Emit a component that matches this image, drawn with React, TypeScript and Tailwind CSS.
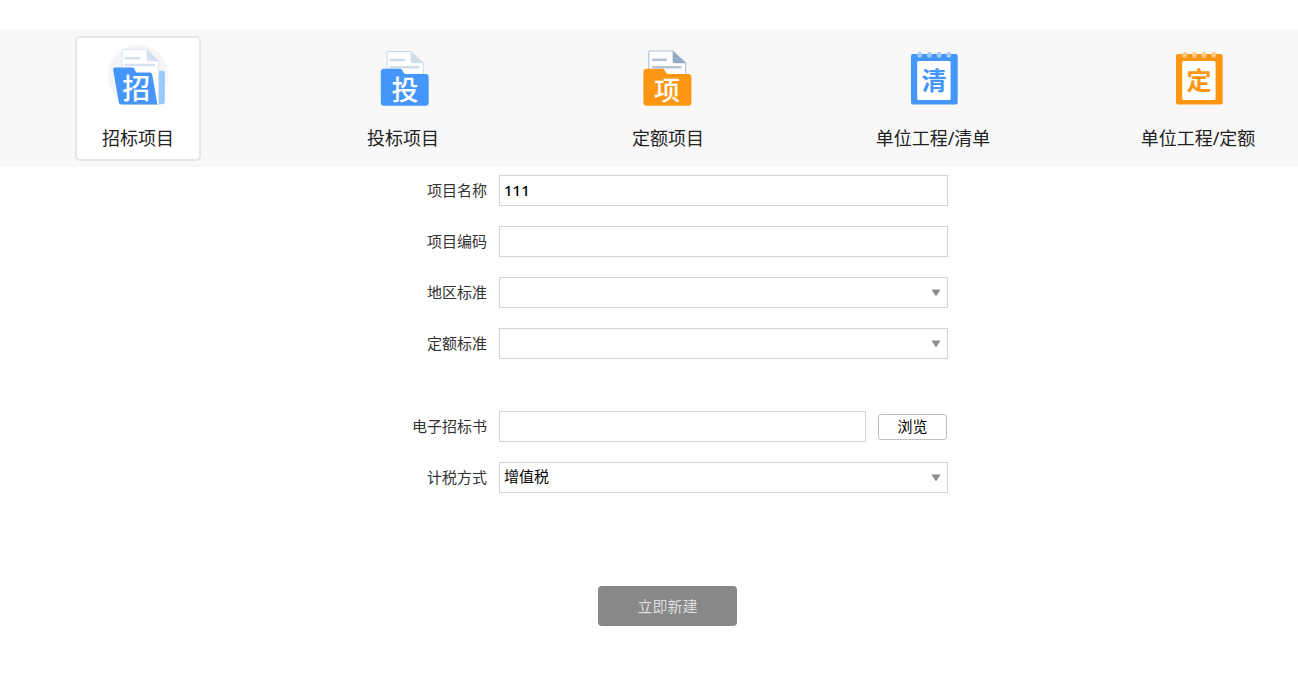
import React, { useState } from 'react';
import { clsx } from 'clsx';

type IconProps = { char: string };

const ICON_FONT = "font-['Noto_Sans_CJK_SC',sans-serif] font-medium";

function OpenFolderIcon({ char }: IconProps) {
  return (
    <svg viewBox="0 0 60 60" className="size-[60px] overflow-visible" aria-hidden="true">
      <circle cx="30" cy="30" r="30" fill="#f5f5f5" />
      <path d="M50 25.7h5a1.8 1.8 0 0 1 1.8 1.8V57a2.3 2.3 0 0 1-2.3 2.3H46z" fill="#97c9fe" />
      <path d="M16 4.3h22.7L50.6 16v43H14V6.3a2 2 0 0 1 2-2z" fill="#fff" stroke="#d9e4f3" strokeWidth="1" />
      <path d="M38.7 4.3 51 16.3H40.7a2 2 0 0 1-2-2z" fill="#d3dfee" />
      <path d="M17.5 13.3H31M17.5 20H46" stroke="#d5e1f0" strokeWidth="2.4" strokeLinecap="round" />
      <path d="M7 22.6h17.5a2 2 0 0 1 1.8 1.2l1.3 2.6a2 2 0 0 0 1.8 1.2h12.4a2.4 2.4 0 0 1 2.4 2l5.2 29.8H13.2a2.4 2.4 0 0 1-2.4-2L5.2 25a2 2 0 0 1 1.8-2.4z" fill="#4596fa" />
      <text x="28.2" y="53.6" fontSize="28" textAnchor="middle" fill="#fff" className={ICON_FONT}>{char}</text>
    </svg>
  );
}

function BlueFolderIcon({ char }: IconProps) {
  return (
    <svg viewBox="0 0 60 60" className="size-[60px] overflow-visible" aria-hidden="true">
      <circle cx="30" cy="30" r="30" fill="#f7f7f7" />
      <path d="M15.5 6.5h22.2l12.6 11.7V34H14V8a1.5 1.5 0 0 1 1.5-1.5z" fill="#fff" stroke="#c9d9ec" strokeWidth="1" />
      <path d="M37.7 6.3 50.8 18.3H39.7a2 2 0 0 1-2-2z" fill="#cfdcea" />
      <path d="M17.5 15H31M17.5 22.3H45.5" stroke="#cfdcec" strokeWidth="2.4" strokeLinecap="round" />
      <path d="M11 23.8h15.5a3 3 0 0 1 2.5 1.3l1.7 2.6a3 3 0 0 0 2.5 1.3H52.5a3.2 3.2 0 0 1 3.2 3.2v25.3a3.2 3.2 0 0 1-3.2 3.2H11a3.2 3.2 0 0 1-3.2-3.2V27a3.2 3.2 0 0 1 3.2-3.2z" fill="#4596fa" />
      <text x="32" y="54.5" fontSize="27" textAnchor="middle" fill="#fff" className={ICON_FONT}>{char}</text>
    </svg>
  );
}

function OrangeFolderIcon({ char }: IconProps) {
  return (
    <svg viewBox="0 0 60 60" className="size-[60px] overflow-visible" aria-hidden="true">
      <path d="M12 6h22.6l13 12v16H10.8V7.2A1.2 1.2 0 0 1 12 6z" fill="#fff" stroke="#adc2db" strokeWidth="1.2" />
      <path d="M34.6 5.6 48.2 18.2H36.6a2 2 0 0 1-2-2z" fill="#93abc5" />
      <path d="M15 14.8H28M15 22.3H42.5" stroke="#b3c3d5" strokeWidth="2.4" strokeLinecap="round" />
      <path d="M8.6 23.8H24a3 3 0 0 1 2.5 1.3l1.7 2.6a3 3 0 0 0 2.5 1.3H50.2a3.2 3.2 0 0 1 3.2 3.2v25.3a3.2 3.2 0 0 1-3.2 3.2H8.6a3.2 3.2 0 0 1-3.2-3.2V27a3.2 3.2 0 0 1 3.2-3.2z" fill="#fd9713" />
      <text x="29" y="54.5" fontSize="26" textAnchor="middle" fill="#fff" className={ICON_FONT}>{char}</text>
    </svg>
  );
}

function NotepadIcon({ char, color, ring }: IconProps & { color: string; ring: string }) {
  return (
    <svg viewBox="0 0 60 60" className="size-[60px] overflow-visible" aria-hidden="true">
      <rect x="8" y="9" width="46.7" height="50.4" rx="2" fill={color} />
      <rect x="14.2" y="16" width="33.4" height="39" rx="1.5" fill="#fff" />
      {[16.7, 26.4, 36, 45.7].map(cx => (
        <g key={cx}>
          <circle cx={cx} cy="10.4" r="2.4" fill={ring} />
          <circle cx={cx} cy="8.6" r="1.9" fill={ring} />
        </g>
      ))}
      <text x="31" y="44.8" fontSize="25" textAnchor="middle" fill={color} className="font-['Noto_Sans_CJK_SC',sans-serif] font-bold">{char}</text>
    </svg>
  );
}

const tabs = [
  { id: 'tender', label: '招标项目', icon: <OpenFolderIcon char="招" /> },
  { id: 'bid', label: '投标项目', icon: <BlueFolderIcon char="投" /> },
  { id: 'quota', label: '定额项目', icon: <OrangeFolderIcon char="项" /> },
  { id: 'unit-list', label: '单位工程/清单', icon: <NotepadIcon char="清" color="#4596fa" ring="#a3cbfd" /> },
  { id: 'unit-quota', label: '单位工程/定额', icon: <NotepadIcon char="定" color="#fd9713" ring="#fecb89" /> },
];

const fieldClass = 'h-[31px] w-full rounded-none border border-[#d2d2d2] bg-white px-1 pb-0.5 text-[15px] text-black outline-none focus:border-[#4596fa]';

function Row({ id, label, className, children }: { id: string; label: string; className?: string; children: React.ReactNode }) {
  return (
    <div className={clsx('flex items-center gap-3', className)}>
      <label htmlFor={id} className="w-[100px] shrink-0 pb-0.5 text-right text-[15px] leading-5 text-[#333]">{label}</label>
      <div className="flex min-w-0 flex-1 items-center gap-3">{children}</div>
    </div>
  );
}

function Select({ id, options }: { id: string; options: string[] }) {
  return (
    <div className="relative w-full">
      <select id={id} className={clsx(fieldClass, 'block appearance-none')}>
        {options.map(o => <option key={o}>{o}</option>)}
      </select>
      <svg viewBox="0 0 10 7" className="pointer-events-none absolute top-3 right-[7px] h-[7px] w-2.5" aria-hidden="true">
        <path d="M0.4 0.5h9.2L5.6 6.4a0.7 0.7 0 0 1-1.2 0z" fill="#8c8c8c" />
      </svg>
    </div>
  );
}

export default function App() {
  const [active, setActive] = useState('tender');
  const [name, setName] = useState('111');

  return (
    <div className="min-h-screen bg-white pt-[29px] font-['Noto_Sans','Noto_Sans_CJK_SC',sans-serif]">
      <nav className="flex justify-between bg-[#f8f8f8] pt-[7px] pr-[37px] pb-1.5 pl-[75px]">
        {tabs.map(tab => (
          <button
            key={tab.id}
            type="button"
            onClick={() => setActive(tab.id)}
            className={clsx(
              'flex h-[125px] w-[126px] flex-col items-center gap-[21px] rounded-[5px] border-2 pt-[7px] text-[18px] leading-6 whitespace-nowrap text-[#222]',
              active === tab.id ? 'border-[#e2e7ea] bg-white' : 'border-transparent'
            )}
          >
            {tab.icon}
            <span>{tab.label}</span>
          </button>
        ))}
      </nav>

      <main className="pt-2 pl-[37px]">
        <form className="mx-auto flex max-w-[561px] flex-col gap-5" onSubmit={e => e.preventDefault()}>
          <Row id="name" label="项目名称">
            <input id="name" type="text" className={clsx(fieldClass, 'font-medium')} value={name} onChange={e => setName(e.target.value)} />
          </Row>
          <Row id="code" label="项目编码">
            <input id="code" type="text" className={fieldClass} />
          </Row>
          <Row id="region" label="地区标准">
            <Select id="region" options={['']} />
          </Row>
          <Row id="standard" label="定额标准">
            <Select id="standard" options={['']} />
          </Row>
          <Row id="file" label="电子招标书" className="mt-8">
            <input id="file" type="text" className={fieldClass} />
            <button type="button" className="mr-px h-[26px] w-[69px] shrink-0 rounded-[3px] border border-[#bfbfbf] bg-white pb-0.5 text-[15px] leading-5 text-black">浏览</button>
          </Row>
          <Row id="tax" label="计税方式">
            <Select id="tax" options={['增值税']} />
          </Row>
          <button type="submit" className="mt-[73px] h-10 w-[139px] self-center rounded-sm bg-[#888] text-[15px] text-[#dcdcdc]">立即新建</button>
        </form>
      </main>
    </div>
  );
}
